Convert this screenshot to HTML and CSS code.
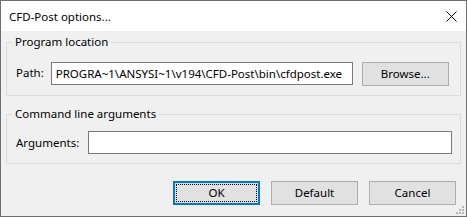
FILE: index.html
```html
<!DOCTYPE html>
<html>
<head>
<meta charset="utf-8">
<link rel="stylesheet" href="styles.css">
</head>
<body>
<div class="window">
  <div class="titlebar">
    <span class="title">CFD-Post options...</span>
    <svg class="close" width="11" height="11" viewBox="0 0 11 11"><path d="M0.5 0.5L10.5 10.5M10.5 0.5L0.5 10.5" stroke="#000" stroke-width="1" fill="none"/></svg>
  </div>
  <div class="content">
    <fieldset class="group group-loc">
      <legend>Program location</legend>
      <div class="row">
        <label class="lbl">Path:</label>
        <div class="input path">PROGRA~1\ANSYSI~1\v194\CFD-Post\bin\cfdpost.exe</div>
        <div class="btn browse">Browse...</div>
      </div>
    </fieldset>
    <fieldset class="group group-args">
      <legend>Command line arguments</legend>
      <div class="row">
        <label class="lbl">Arguments:</label>
        <div class="input args"></div>
      </div>
    </fieldset>
    <div class="actions">
      <div class="btn ok"><span class="focus">OK</span></div>
      <div class="btn">Default</div>
      <div class="btn">Cancel</div>
    </div>
    <div class="grip">
      <svg width="8" height="8" viewBox="0 0 8 8" fill="#b8b8b8">
        <rect x="6" y="0" width="2" height="2"/>
        <rect x="3" y="3" width="2" height="2"/><rect x="6" y="3" width="2" height="2"/>
        <rect x="0" y="6" width="2" height="2"/><rect x="3" y="6" width="2" height="2"/><rect x="6" y="6" width="2" height="2"/>
      </svg>
    </div>
  </div>
</div>
</body>
</html>
```
FILE: styles.css
```css
* { box-sizing: border-box; }
html, body { margin: 0; padding: 0; background: #fff; }
body {
  font-family: "Noto Sans", "Open Sans", sans-serif;
  font-size: 11.5px;
  color: #000;
}
.window {
  width: 467px;
  height: 217px;
  border: 1px solid #6e6e6e;
  background: #f0f0f0;
  display: flex;
  flex-direction: column;
}
.titlebar {
  height: 30px;
  background: #fff;
  display: flex;
  align-items: center;
  padding-left: 8px;
  padding-right: 9px;
  flex: none;
}
.title { flex: 1; line-height: 16px; margin-top: 1px; }
.close { display: block; margin-top: 0; }
.content {
  flex: 1;
  position: relative;
  padding: 3px 5px 0 5px;
  display: flex;
  flex-direction: column;
}
.group {
  margin: 0;
  border: 1px solid #dcdcdc;
  padding: 0 9px 0 9px;
  min-width: 0;
}
.group legend {
  margin-left: -4px;
  padding: 0 3px;
  line-height: 16px;
  height: 16px;
}
.group-loc { padding-top: 10px; padding-bottom: 9px; }
.group-args { margin-top: 10px; padding-top: 9px; padding-bottom: 9px; }
.row {
  display: flex;
  align-items: center;
}
.lbl { line-height: 16px; }
.input {
  background: #fff;
  border: 1px solid #7a7a7a;
  height: 23px;
  line-height: 21px;
  padding-left: 4px;
  white-space: nowrap;
  overflow: hidden;
}
.path { margin-left: 7px; width: 302px; }
.args { margin-left: 9px; flex: 1; margin-right: -1px; }
.btn {
  width: 87px;
  height: 24px;
  background: #e1e1e1;
  border: 1px solid #adadad;
  display: flex;
  align-items: center;
  justify-content: center;
  line-height: 16px;
}
.browse { margin-left: 9px; margin-top: 2px; }
.actions {
  display: flex;
  justify-content: flex-end;
  gap: 11px;
  margin-top: 17px;
  padding-right: 5px;
}
.btn.ok {
  border: 2px solid #0078d7;
  padding: 1px;
}
.focus {
  flex: 1;
  align-self: stretch;
  border: 1px dotted #000;
  display: flex;
  align-items: center;
  justify-content: center;
}
.grip {
  position: absolute;
  right: 2px;
  bottom: 2px;
  line-height: 0;
}
```
